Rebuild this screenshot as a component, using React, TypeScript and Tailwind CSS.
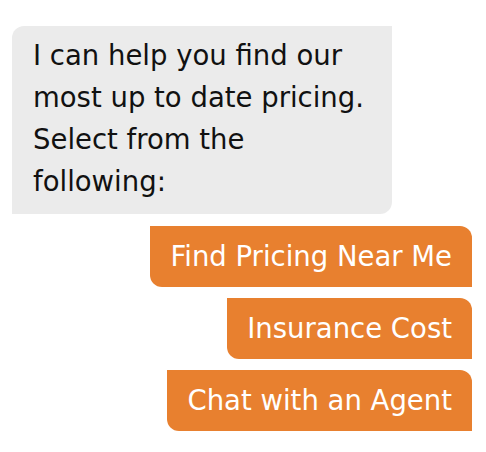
const options = ["Find Pricing Near Me", "Insurance Cost", "Chat with an Agent"];

export default function App() {
  return (
    <div className="min-h-[452px] w-[486px] bg-white pl-3 pr-[14px] pt-[26px] font-['DejaVu_Sans','Noto_Sans',sans-serif]">
      <div className="w-[380px] rounded-tl-xl rounded-br-xl bg-[#ebebeb] pl-[21px] pr-3 pt-2 pb-3 text-[27.5px] leading-[42px] text-[#111]">
        I can help you find our
        <br />
        most up to date pricing.
        <br />
        Select from the
        <br />
        following:
      </div>

      <div className="mt-3 flex flex-col items-end gap-[11px]">
        {options.map((label) => (
          <button
            key={label}
            className="flex h-[61px] items-center rounded-tr-xl rounded-bl-xl bg-[#e8802f] px-5 text-[27.5px] text-white"
          >
            {label}
          </button>
        ))}
      </div>
    </div>
  );
}
